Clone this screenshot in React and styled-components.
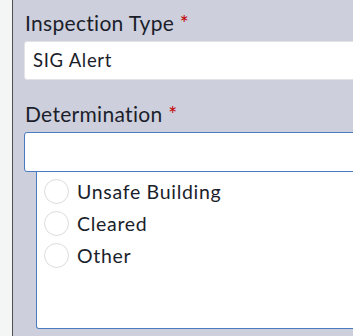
import React from "react";
import styled, { createGlobalStyle } from "styled-components";

const GlobalStyle = createGlobalStyle`
  html, body {
    margin: 0;
    padding: 0;
    background: #f4f5f5;
  }
  * {
    box-sizing: border-box;
  }
`;

const options = ["Unsafe Building", "Cleared", "Other"];

const App = () => {
  return (
    <Page>
      <GlobalStyle />
      <Gutter />
      <Panel>
        <Label>
          Inspection Type <Required>*</Required>
        </Label>
        <TextBox>SIG Alert</TextBox>
        <Label $top={22}>
          Determination <Required>*</Required>
        </Label>
        <TextBox $focused />
        <OptionList>
          {options.map((option) => (
            <OptionRow key={option}>
              <Radio />
              <OptionText>{option}</OptionText>
            </OptionRow>
          ))}
        </OptionList>
      </Panel>
    </Page>
  );
};

export default App;

const Page = styled.div`
  display: flex;
  width: 353px;
  height: 336px;
  overflow: hidden;
  font-family: Lato, "Open Sans", sans-serif;
  color: #1b1e2b;
`;

const Gutter = styled.div`
  flex: 0 0 13px;
  background-color: #f4f5f5;
  border-right: 1px solid #505050;
`;

const Panel = styled.div`
  flex: 1;
  display: flex;
  flex-direction: column;
  background-color: #cdcfdc;
  padding: 11px 0px 0px 11px;
`;

const Label = styled.div`
  font-size: 21px;
  line-height: 24px;
  letter-spacing: 0.3px;
  margin: ${(p) => p.$top || 0}px 0px 6px 1px;
  white-space: nowrap;
`;

const Required = styled.span`
  color: #c40000;
`;

const TextBox = styled.div`
  width: 420px;
  height: ${(p) => (p.$focused ? 40 : 39)}px;
  padding: 0px 8px;
  border: 1px solid ${(p) => (p.$focused ? "#4a7bc0" : "#e2e3e6")};
  border-radius: 3px;
  background-color: #ffffff;
  font-size: 18.5px;
  line-height: 37px;
  letter-spacing: 0.7px;
  white-space: nowrap;
`;

const OptionList = styled.div`
  display: flex;
  flex-direction: column;
  gap: 7px;
  width: 420px;
  height: 157px;
  margin: 0px 0px 0px 12px;
  padding: 7px 7px;
  background-color: #ffffff;
  border: 1px solid #4a7bc0;
  border-top: none;
  border-radius: 0px 0px 3px 3px;
`;

const OptionRow = styled.div`
  display: flex;
  align-items: center;
  gap: 8px;
  height: 25px;
`;

const Radio = styled.span`
  flex: 0 0 25px;
  width: 25px;
  height: 25px;
  border-radius: 50%;
  border: 1px solid #dcdcdc;
  background-color: #ffffff;
`;

const OptionText = styled.span`
  font-size: 19.5px;
  line-height: 23px;
  letter-spacing: 0.7px;
  white-space: nowrap;
`;
